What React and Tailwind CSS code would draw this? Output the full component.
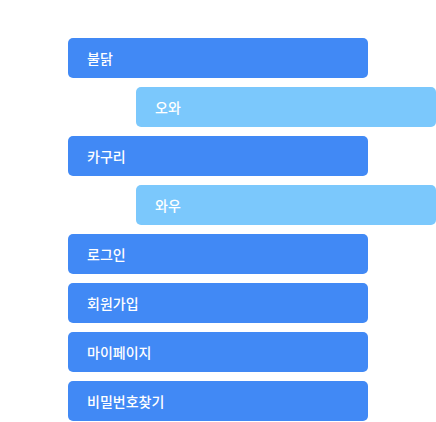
import React from 'react';

const items = [
  { label: '불닭', sub: false },
  { label: '오와', sub: true },
  { label: '카구리', sub: false },
  { label: '와우', sub: true },
  { label: '로그인', sub: false },
  { label: '회원가입', sub: false },
  { label: '마이페이지', sub: false },
  { label: '비밀번호찾기', sub: false },
];

export default function App() {
  return (
    <div
      className="w-[436px] h-[422px] bg-white overflow-hidden pt-[38px]"
      style={{ fontFamily: '"Noto Sans CJK KR", "Noto Sans", sans-serif' }}
    >
      <div className="flex flex-col gap-[9px]">
        {items.map((it, i) => (
          <div
            key={i}
            className={`w-[300px] h-[40px] rounded-[5px] flex items-center pl-[19px] text-white text-[14px] font-medium ${
              it.sub ? 'ml-[136px] bg-[#7bc8fc]' : 'ml-[68px] bg-[#4189f5]'
            }`}
          >
            {it.label}
          </div>
        ))}
      </div>
    </div>
  );
}
